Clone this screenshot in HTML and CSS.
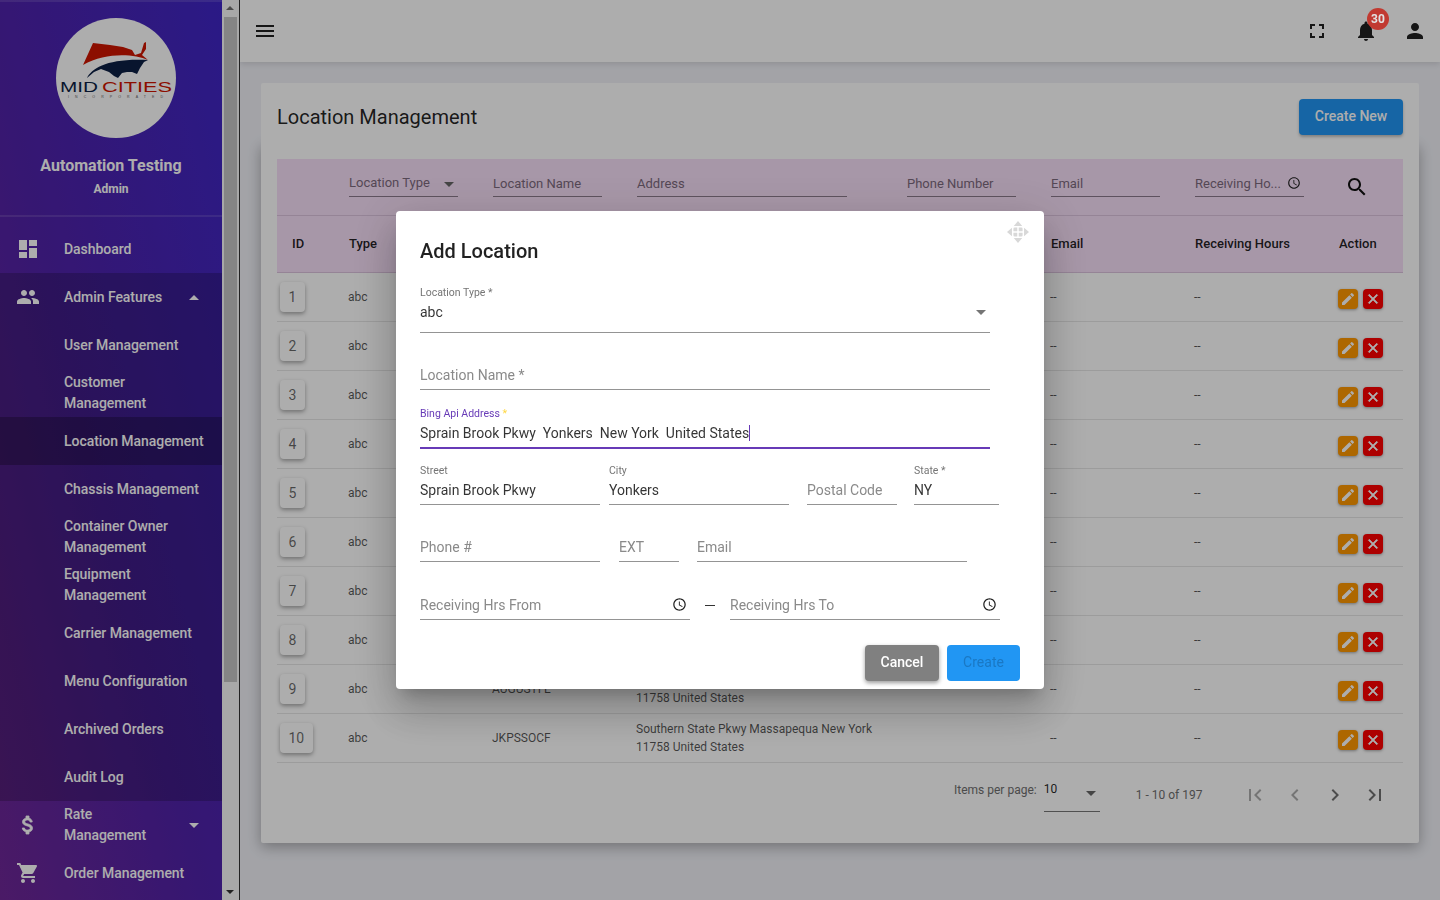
FILE: index.html
```html
<!DOCTYPE html>
<html lang="en">
<head>
  <meta charset="UTF-8">
  <title>Location Management</title>
  <link rel="stylesheet" href="styles.css">
</head>
<body>

  <svg class="defs">
    <symbol id="pencil" viewBox="0 0 24 24"><path d="M3 17.25V21h3.75L17.81 9.94l-3.75-3.75L3 17.25zM20.71 7.04a1 1 0 0 0 0-1.41l-2.34-2.34a1 1 0 0 0-1.41 0l-1.83 1.83 3.75 3.75 1.83-1.83z"/></symbol>
    <symbol id="cross" viewBox="0 0 24 24"><path d="M19 6.41 17.59 5 12 10.59 6.41 5 5 6.41 10.59 12 5 17.59 6.41 19 12 13.41 17.59 19 19 17.59 13.41 12z"/></symbol>
    <symbol id="clock" viewBox="0 0 24 24"><path d="M11.99 2C6.47 2 2 6.48 2 12s4.47 10 9.99 10C17.52 22 22 17.52 22 12S17.52 2 11.99 2zM12 20c-4.42 0-8-3.58-8-8s3.58-8 8-8 8 3.58 8 8-3.58 8-8 8zm.5-13H11v6l5.25 3.15.75-1.23-4.5-2.67z"/></symbol>
  </svg>

  <aside class="sidebar">
    <div class="brand">
      <div class="logo">
        <svg viewBox="0 0 120 120" width="120" height="120">
          <path fill="#cf1600" d="M27 47 L37 25 L54 27 L67 29 L76 32 L79 37 L85 35 L88 25 L90 24 L90 31 L86 37 L92 42 C78 36 50 34 27 47Z"/>
          <path fill="#0c1f45" d="M31 60 C36 50 52 40 92 42 L88 44 L84 50 L81 56 L76 54 L71 54 L66 55 L62 60 L58 58 L53 54 L45 51 L38 54Z"/>
          <text class="logo-mid" x="4" y="74" textLength="38" lengthAdjust="spacingAndGlyphs">MID</text>
          <text class="logo-cities" x="46" y="74" textLength="70" lengthAdjust="spacingAndGlyphs">CITIES</text>
          <text class="logo-inc" x="12" y="79.5" textLength="95">INCORPORATED</text>
        </svg>
      </div>
      <div class="brand-name">Automation Testing</div>
      <div class="brand-role">Admin</div>
    </div>

    <nav class="menu">
      <a class="menu-item">
        <svg class="menu-icon" viewBox="0 0 24 24"><path d="M3 13h8V3H3v10zm0 8h8v-6H3v6zm10 0h8V11h-8v10zm0-18v6h8V3h-8z"/></svg>
        <span>Dashboard</span>
      </a>
      <div class="submenu">
        <a class="menu-item">
          <svg class="menu-icon" viewBox="0 0 24 24"><path d="M16 11c1.66 0 2.99-1.34 2.99-3S17.66 5 16 5s-3 1.34-3 3 1.34 3 3 3zm-8 0c1.66 0 2.99-1.34 2.99-3S9.66 5 8 5 5 6.34 5 8s1.34 3 3 3zm0 2c-2.33 0-7 1.17-7 3.5V19h14v-2.5C15 14.17 10.33 13 8 13zm8 0c-.29 0-.62.02-.97.05 1.16.84 1.97 1.97 1.97 3.45V19h6v-2.5c0-2.33-4.67-3.5-7-3.5z"/></svg>
          <span>Admin Features</span>
          <i class="caret caret-up"></i>
        </a>
        <a class="menu-item sub">User Management</a>
        <a class="menu-item sub">Customer Management</a>
        <a class="menu-item sub active">Location Management</a>
        <a class="menu-item sub">Chassis Management</a>
        <a class="menu-item sub">Container Owner Management</a>
        <a class="menu-item sub">Equipment Management</a>
        <a class="menu-item sub">Carrier Management</a>
        <a class="menu-item sub">Menu Configuration</a>
        <a class="menu-item sub">Archived Orders</a>
        <a class="menu-item sub">Audit Log</a>
      </div>
      <a class="menu-item">
        <svg class="menu-icon bold" viewBox="0 0 24 24"><path d="M11.8 10.9c-2.27-.59-3-1.2-3-2.15 0-1.09 1.01-1.85 2.7-1.85 1.78 0 2.44.85 2.5 2.1h2.21c-.07-1.72-1.12-3.3-3.21-3.81V3h-3v2.16c-1.94.42-3.5 1.68-3.5 3.61 0 2.31 1.91 3.46 4.7 4.13 2.5.6 3 1.48 3 2.41 0 .69-.49 1.79-2.7 1.79-2.06 0-2.87-.92-2.98-2.1h-2.2c.12 2.19 1.76 3.42 3.68 3.83V21h3v-2.15c1.95-.37 3.5-1.5 3.5-3.55 0-2.84-2.43-3.81-4.7-4.4z"/></svg>
        <span class="narrow">Rate Management</span>
        <i class="caret"></i>
      </a>
      <a class="menu-item">
        <svg class="menu-icon" viewBox="0 0 24 24"><path d="M7 18c-1.1 0-1.99.9-1.99 2S5.9 22 7 22s2-.9 2-2-.9-2-2-2zM1 2v2h2l3.6 7.59-1.35 2.45c-.16.28-.25.61-.25.96 0 1.1.9 2 2 2h12v-2H7.42c-.14 0-.25-.11-.25-.25l.03-.12.9-1.63h7.45c.75 0 1.41-.41 1.75-1.03l3.58-6.49c.08-.14.12-.31.12-.48 0-.55-.45-1-1-1H5.21l-.94-2H1zm16 16c-1.1 0-1.99.9-1.99 2s.89 2 1.99 2 2-.9 2-2-.9-2-2-2z"/></svg>
        <span>Order Management</span>
      </a>
    </nav>
  </aside>

  <div class="scrollbar">
    <i class="scroll-arrow"></i>
    <div class="scroll-thumb"></div>
    <i class="scroll-arrow down"></i>
  </div>

  <main class="main">
    <header class="topbar">
      <svg class="top-icon menu-btn" viewBox="0 0 24 24"><path d="M3 18h18v-2H3v2zm0-5h18v-2H3v2zm0-7v2h18V6H3z"/></svg>
      <div class="top-right">
        <svg class="top-icon" viewBox="0 0 24 24"><path d="M7 14H5v5h5v-2H7v-3zM5 10h2V7h3V5H5v5zm12 7h-3v2h5v-5h-2v3zM14 5v2h3v3h2V5h-5z"/></svg>
        <div class="bell">
          <svg class="top-icon" viewBox="0 0 24 24"><path d="M12 22c1.1 0 2-.9 2-2h-4c0 1.1.9 2 2 2zm6-6v-5c0-3.07-1.63-5.64-4.5-6.32V4c0-.83-.67-1.5-1.5-1.5s-1.5.67-1.5 1.5v.68C7.64 5.36 6 7.92 6 11v5l-2 2v1h16v-1l-2-2z"/></svg>
          <span class="badge">30</span>
        </div>
        <svg class="top-icon" viewBox="0 0 24 24"><path d="M12 12c2.21 0 4-1.79 4-4s-1.79-4-4-4-4 1.79-4 4 1.79 4 4 4zm0 2c-2.67 0-8 1.34-8 4v2h16v-2c0-2.66-5.33-4-8-4z"/></svg>
      </div>
    </header>

    <section class="card">
      <div class="card-head">
        <h1>Location Management</h1>
        <button class="btn btn-blue">Create New</button>
      </div>
      <div class="card-body">
        <div class="table">
          <div class="row filter-row">
            <span></span>
            <div class="filter select"><span class="filter-select">Location Type</span><i class="caret dark"></i></div>
            <div class="filter">Location Name</div>
            <div class="filter w210">Address</div>
            <div class="filter">Phone Number</div>
            <div class="filter">Email</div>
            <div class="filter">Receiving Ho...
              <svg class="clock small"><use href="#clock"/></svg>
            </div>
            <svg class="search" viewBox="0 0 24 24"><path d="M15.5 14h-.79l-.28-.27C15.41 12.59 16 11.11 16 9.5 16 5.91 13.09 3 9.5 3S3 5.91 3 9.5 5.91 16 9.5 16c1.61 0 3.09-.59 4.23-1.57l.27.28v.79l5 4.99L20.49 19l-4.99-5zm-6 0C7.01 14 5 11.99 5 9.5S7.01 5 9.5 5 14 7.01 14 9.5 11.99 14 9.5 14z"/></svg>
          </div>
          <div class="row head-row">
            <span class="id-head">ID</span><span>Type</span><span></span><span></span><span></span><span>Email</span><span>Receiving Hours</span><span>Action</span>
          </div>
          <div class="row data-row"><span><button class="id-btn">1</button></span><span class="cell">abc</span><span></span><span></span><span></span><span class="cell">--</span><span class="cell">--</span><div class="actions"><button class="act edit"><svg><use href="#pencil"/></svg></button><button class="act del"><svg><use href="#cross"/></svg></button></div></div>
          <div class="row data-row"><span><button class="id-btn">2</button></span><span class="cell">abc</span><span></span><span></span><span></span><span class="cell">--</span><span class="cell">--</span><div class="actions"><button class="act edit"><svg><use href="#pencil"/></svg></button><button class="act del"><svg><use href="#cross"/></svg></button></div></div>
          <div class="row data-row"><span><button class="id-btn">3</button></span><span class="cell">abc</span><span></span><span></span><span></span><span class="cell">--</span><span class="cell">--</span><div class="actions"><button class="act edit"><svg><use href="#pencil"/></svg></button><button class="act del"><svg><use href="#cross"/></svg></button></div></div>
          <div class="row data-row"><span><button class="id-btn">4</button></span><span class="cell">abc</span><span></span><span></span><span></span><span class="cell">--</span><span class="cell">--</span><div class="actions"><button class="act edit"><svg><use href="#pencil"/></svg></button><button class="act del"><svg><use href="#cross"/></svg></button></div></div>
          <div class="row data-row"><span><button class="id-btn">5</button></span><span class="cell">abc</span><span></span><span></span><span></span><span class="cell">--</span><span class="cell">--</span><div class="actions"><button class="act edit"><svg><use href="#pencil"/></svg></button><button class="act del"><svg><use href="#cross"/></svg></button></div></div>
          <div class="row data-row"><span><button class="id-btn">6</button></span><span class="cell">abc</span><span></span><span></span><span></span><span class="cell">--</span><span class="cell">--</span><div class="actions"><button class="act edit"><svg><use href="#pencil"/></svg></button><button class="act del"><svg><use href="#cross"/></svg></button></div></div>
          <div class="row data-row"><span><button class="id-btn">7</button></span><span class="cell">abc</span><span></span><span></span><span></span><span class="cell">--</span><span class="cell">--</span><div class="actions"><button class="act edit"><svg><use href="#pencil"/></svg></button><button class="act del"><svg><use href="#cross"/></svg></button></div></div>
          <div class="row data-row"><span><button class="id-btn">8</button></span><span class="cell">abc</span><span></span><span></span><span></span><span class="cell">--</span><span class="cell">--</span><div class="actions"><button class="act edit"><svg><use href="#pencil"/></svg></button><button class="act del"><svg><use href="#cross"/></svg></button></div></div>
          <div class="row data-row"><span><button class="id-btn">9</button></span><span class="cell">abc</span><span class="cell">AUGUSTI E</span><span class="cell addr">Southern State Pkwy Massapequa New York 11758 United States</span><span></span><span class="cell">--</span><span class="cell">--</span><div class="actions"><button class="act edit"><svg><use href="#pencil"/></svg></button><button class="act del"><svg><use href="#cross"/></svg></button></div></div>
          <div class="row data-row"><span><button class="id-btn">10</button></span><span class="cell">abc</span><span class="cell">JKPSSOCF</span><span class="cell addr">Southern State Pkwy Massapequa New York 11758 United States</span><span></span><span class="cell">--</span><span class="cell">--</span><div class="actions"><button class="act edit"><svg><use href="#pencil"/></svg></button><button class="act del"><svg><use href="#cross"/></svg></button></div></div>
        </div>

        <div class="pager">
          <span class="per-page">Items per page:</span>
          <div class="per-select"><span>10</span><i class="caret dark"></i></div>
          <span class="range">1 - 10 of 197</span>
          <div class="pager-nav">
            <svg class="faded" viewBox="0 0 24 24"><path d="M18.41 16.59 13.82 12l4.59-4.59L17 6l-6 6 6 6zM6 6h2v12H6z"/></svg>
            <svg class="faded" viewBox="0 0 24 24"><path d="M15.41 7.41 14 6l-6 6 6 6 1.41-1.41L10.83 12z"/></svg>
            <svg viewBox="0 0 24 24"><path d="M10 6 8.59 7.41 13.17 12l-4.58 4.59L10 18l6-6z"/></svg>
            <svg viewBox="0 0 24 24"><path d="M5.59 7.41 10.18 12l-4.59 4.59L7 18l6-6-6-6zM16 6h2v12h-2z"/></svg>
          </div>
        </div>
      </div>
    </section>
  </main>

  <div class="overlay">
    <div class="modal">
      <svg class="move-icon" viewBox="0 0 24 24"><path d="M12 0l4.6 5.4H7.4zM12 24l-4.6-5.4h9.2zM0 12l5.4-4.6v9.2zM24 12l-5.4 4.6V7.4z"/><path d="M8.500 7h2.700v4.200H7V8.500A1.500 1.500 0 0 1 8.500 7zM12.800 7h2.700A1.500 1.500 0 0 1 17 8.500v2.700h-4.200zM7 12.800h4.200V17H8.500A1.500 1.500 0 0 1 7 15.500zM12.800 12.800H17v2.700a1.500 1.500 0 0 1-1.500 1.500h-2.700z"/></svg>
      <h2>Add Location</h2>

      <div class="form-row first">
        <div class="field w570 tall">
          <label>Location Type *</label>
          <div class="value">abc</div>
          <i class="caret field-caret"></i>
        </div>
      </div>
      <div class="form-row">
        <div class="field w570">
          <label></label>
          <div class="value empty">Location Name *</div>
        </div>
      </div>
      <div class="form-row wide-gap">
        <div class="field w570 focused">
          <label>Bing Api Address <em>*</em></label>
          <div class="value"><span class="cursor">Sprain Brook Pkwy&nbsp; Yonkers&nbsp; New York&nbsp; United States</span></div>
        </div>
      </div>
      <div class="form-row after-focus">
        <div class="field w180"><label>Street</label><div class="value">Sprain Brook Pkwy</div></div>
        <div class="field w180 gap9"><label>City</label><div class="value">Yonkers</div></div>
        <div class="field w90 gap18"><label></label><div class="value empty">Postal Code</div></div>
        <div class="field w85 gap17"><label>State *</label><div class="value">NY</div></div>
      </div>
      <div class="form-row">
        <div class="field w180"><label></label><div class="value empty">Phone #</div></div>
        <div class="field w60 gap19"><label></label><div class="value empty">EXT</div></div>
        <div class="field w270 gap18"><label></label><div class="value empty">Email</div></div>
      </div>
      <div class="form-row wide-gap">
        <div class="field w270">
          <label></label>
          <div class="value empty">Receiving Hrs From</div>
          <svg class="clock"><use href="#clock"/></svg>
        </div>
        <span class="dash"></span>
        <div class="field w270">
          <label></label>
          <div class="value empty">Receiving Hrs To</div>
          <svg class="clock"><use href="#clock"/></svg>
        </div>
      </div>

      <div class="modal-actions">
        <button class="btn btn-grey">Cancel</button>
        <button class="btn btn-create">Create</button>
      </div>
    </div>
  </div>

</body>
</html>
```

FILE: styles.css
```css
* {
  box-sizing: border-box;
}

body {
  margin: 0;
  height: 900px;
  overflow: hidden;
  display: flex;
  font-family: Roboto, Arial, sans-serif;
  background: #f0f1f7;
  color: rgba(0,0,0,0.87);
}

.defs {
  display: none;
}

.caret {
  width: 0;
  height: 0;
  border-left: 5px solid transparent;
  border-right: 5px solid transparent;
  border-top: 5px solid #fff;
  display: block;
}

.caret-up {
  border-top: 0;
  border-bottom: 5px solid #fff;
}

.caret.dark {
  border-top-color: #666;
}

/* sidebar */
.sidebar {
  width: 222px;
  height: 900px;
  flex-shrink: 0;
  overflow: hidden;
  color: #fff;
  background: linear-gradient(to bottom left, #3f26c6 0%, #5022a8 55%, #6e2797 100%);
}

.brand {
  height: 217px;
  padding-top: 16px;
  border-top: 2px solid rgba(255,255,255,0.12);
  border-bottom: 2px solid rgba(255,255,255,0.12);
  text-align: center;
}

.logo {
  width: 120px;
  height: 120px;
  margin-left: 56px;
  border-radius: 50%;
  background: #fff;
}

.logo svg {
  display: block;
}

.logo-mid,
.logo-cities {
  font: 400 14px "Liberation Sans", Arial, sans-serif;
}

.logo-mid {
  fill: #0c1f45;
}

.logo-cities {
  fill: #cf1600;
}

.logo-inc {
  font: 400 3.5px "Liberation Sans", Arial, sans-serif;
  fill: #666;
}

.brand-name {
  margin-top: 17px;
  font-size: 16px;
  font-weight: 700;
  line-height: 21px;
}

.brand-role {
  margin-top: 5px;
  font-size: 12px;
  font-weight: 700;
  line-height: 16px;
}

.menu {
  padding-top: 8px;
}

.menu-item {
  height: 48px;
  display: flex;
  align-items: center;
  padding: 0 23px 0 64px;
  position: relative;
  font-size: 14px;
  font-weight: 500;
  line-height: 21px;
  letter-spacing: -0.05px;
}

.menu-item .caret {
  margin-left: auto;
  flex-shrink: 0;
}

.narrow {
  max-width: 90px;
}

.menu-icon {
  position: absolute;
  left: 16px;
  top: 12px;
  width: 24px;
  height: 24px;
  fill: #fff;
}

.menu-icon.bold {
  stroke: #fff;
  stroke-width: 0.8;
}

.submenu {
  background: rgba(0,0,0,0.2);
}

.sub {
  padding-right: 13px;
}

.active {
  background: rgba(0,0,0,0.25);
}

/* page scrollbar */
.scrollbar {
  width: 18px;
  height: 900px;
  flex-shrink: 0;
  background: #f8f8f8;
  border-right: 1px solid #333;
  position: relative;
}

.scroll-thumb {
  position: absolute;
  left: 2px;
  top: 17px;
  width: 13px;
  height: 665px;
  background: #c4c4c4;
}

.scroll-arrow {
  position: absolute;
  left: 4px;
  top: 6px;
  width: 0;
  height: 0;
  border-left: 4px solid transparent;
  border-right: 4px solid transparent;
  border-bottom: 4px solid #707070;
}

.scroll-arrow.down {
  top: auto;
  bottom: 6px;
  border-bottom: 0;
  border-top: 4px solid #333;
}

/* main */
.main {
  flex: 1;
  min-width: 0;
}

.topbar {
  height: 62px;
  background: #fff;
  display: flex;
  align-items: center;
  justify-content: space-between;
  padding: 0 13px;
  box-shadow: 0 2px 6px rgba(0,0,0,0.12);
}

.top-icon {
  width: 24px;
  height: 24px;
  display: block;
  fill: #212121;
}

.top-right {
  display: flex;
  align-items: center;
  gap: 25px;
}

.bell {
  position: relative;
}

/* the reference keeps the badge brighter than the dimmed page */
.badge {
  position: absolute;
  z-index: 2;
  left: 13px;
  top: -11px;
  width: 22px;
  height: 22px;
  border-radius: 50%;
  background: #c13a31;
  color: #e2e2e2;
  font-size: 12px;
  font-weight: 700;
  line-height: 22px;
  text-align: center;
}

.card {
  margin: 21px 21px 0;
}

.card-head {
  height: 60px;
  display: flex;
  align-items: center;
  justify-content: space-between;
  padding: 0 16px;
  background: #fff;
  border-radius: 2px 2px 0 0;
  position: relative;
}

.card-head h1 {
  margin: 0 0 -8px;
  font-size: 20px;
  font-weight: 400;
}

.btn {
  border: 0;
  border-radius: 4px;
  padding: 0 0 2px;
  font-family: inherit;
  font-size: 14px;
  font-weight: 500;
  height: 36px;
  color: #fff;
}

.btn-blue {
  width: 104px;
  margin-top: 8px;
  background: #2196f3;
  box-shadow: 0 2px 3px rgba(0,0,0,0.25);
}

.card-body {
  height: 700px;
  padding: 16px;
  background: #fff;
  border-radius: 0 0 2px 2px;
  box-shadow: 0 4px 14px rgba(0,0,0,0.3);
}

.row {
  display: grid;
  grid-template-columns: 72px 144px 144px 270px 144px 144px 144px 64px;
  align-items: center;
}

.filter-row,
.head-row {
  background: #f7dff8;
  border-bottom: 1px solid #dcc3de;
}

.filter-row {
  height: 57px;
  align-items: start;
}

.filter {
  width: 109px;
  height: 26px;
  margin-top: 12px;
  padding-top: 4px;
  border-bottom: 1px solid #8b7a8c;
  font-size: 13px;
  line-height: 17px;
  color: #7d6a7e;
  position: relative;
}

.w210 {
  width: 210px;
}

.select .caret {
  position: absolute;
  right: 4px;
  top: 11px;
}

.filter-select {
  position: relative;
  top: -1px;
}

.clock {
  position: absolute;
  right: 3px;
  top: 21px;
  width: 15px;
  height: 15px;
  fill: #222;
}

.clock.small {
  top: 5px;
  right: 3px;
  width: 14px;
  height: 14px;
}

.search {
  width: 24px;
  height: 24px;
  margin: 16px 0 0 6px;
  fill: #111;
}

.head-row {
  height: 57px;
  padding-bottom: 2px;
  font-size: 13px;
  font-weight: 500;
}

.id-head {
  padding-left: 15px;
}

.data-row {
  height: 49px;
  border-bottom: 1px solid #e6e6e6;
  font-size: 12px;
  line-height: 18px;
}

.cell {
  margin-left: -1px;
  color: rgba(0,0,0,0.68);
}

.addr {
  max-width: 240px;
}

.id-btn {
  min-width: 24px;
  height: 30px;
  margin: 0 0 1px 3px;
  padding: 0 8.5px;
  border: 0;
  border-radius: 4px;
  background: #fff;
  font-family: inherit;
  font-size: 14px;
  color: rgba(0,0,0,0.6);
  box-shadow: 0 2px 4px rgba(0,0,0,0.35);
}

.actions {
  display: flex;
  gap: 5px;
  margin: 4px 0 0 -1px;
}

.act {
  width: 20px;
  height: 20px;
  padding: 2px;
  border: 0;
  border-radius: 4px;
  box-shadow: 0 1px 3px rgba(0,0,0,0.35);
}

.act svg {
  display: block;
  width: 16px;
  height: 16px;
  fill: #fff;
}

.del svg {
  stroke: #fff;
  stroke-width: 1;
}

.edit {
  background: #ff9800;
}

.del {
  background: #ff0000;
}

.pager {
  height: 80px;
  display: flex;
  font-size: 12px;
  color: #6f6f6f;
}

.per-page {
  margin: 20px 0 0 677px;
}

.per-select {
  width: 56px;
  height: 30px;
  margin: 19px 0 0 7px;
  border-bottom: 1px solid #777;
  color: rgba(0,0,0,0.87);
  position: relative;
}

.per-select .caret {
  position: absolute;
  right: 4px;
  top: 9px;
}

.range {
  margin: 25px 0 0 36px;
}

.pager-nav {
  display: flex;
  gap: 16px;
  margin: 20px 0 0 41px;
}

.pager-nav svg {
  width: 24px;
  height: 24px;
  fill: #707070;
}

.pager-nav .faded {
  fill: #adadad;
}

/* dialog */
.overlay {
  position: fixed;
  inset: 0;
  background: rgba(0,0,0,0.32);
  display: flex;
  align-items: center;
  justify-content: center;
}

.modal {
  width: 648px;
  height: 478px;
  padding: 24px;
  background: #fff;
  border-radius: 4px;
  position: relative;
  box-shadow: 0 11px 15px -7px rgba(0,0,0,0.2), 0 24px 38px 3px rgba(0,0,0,0.14), 0 9px 46px 8px rgba(0,0,0,0.12);
}

.move-icon {
  position: absolute;
  right: 15px;
  top: 10px;
  width: 22px;
  height: 22px;
  fill: #d8d8d8;
}

.modal h2 {
  margin: 0 0 16px;
  font-size: 20px;
  font-weight: 500;
  line-height: 32px;
}

.form-row {
  display: flex;
  margin-top: 13px;
}

.form-row.first {
  margin-top: 0;
}

.form-row.wide-gap {
  margin-top: 14px;
}

.form-row.after-focus {
  margin-top: 12px;
}

.field {
  height: 44px;
  padding-bottom: 3px;
  border-bottom: 1px solid #949494;
  position: relative;
  flex-shrink: 0;
}

.field.tall {
  height: 50px;
}

.field label {
  display: block;
  height: 18px;
  font-size: 10.5px;
  line-height: 20px;
  color: #757575;
}

.field .value {
  height: 22px;
  font-size: 14px;
  line-height: 22px;
  color: rgba(0,0,0,0.8);
  white-space: nowrap;
}

.field .value.empty {
  color: #8a8a8a;
}

.field.focused {
  height: 45px;
  border-bottom: 2px solid #673ab7;
}

.field.focused label {
  color: #673ab7;
}

.field.focused em {
  font-style: normal;
  color: #ffd740;
}

.cursor {
  border-right: 1px solid #673ab7;
}

.field-caret {
  position: absolute;
  right: 4px;
  top: 27px;
  border-top-color: #757575;
}

.w570 { width: 570px; }
.w270 { width: 270px; }
.w180 { width: 180px; }
.w90 { width: 90px; }
.w85 { width: 85px; }
.w60 { width: 60px; }
.gap9 { margin-left: 9px; }
.gap17 { margin-left: 17px; }
.gap18 { margin-left: 18px; }
.gap19 { margin-left: 19px; }

.dash {
  width: 10px;
  height: 1px;
  margin: 29px 15px 0;
  background: #333;
}

.modal-actions {
  display: flex;
  justify-content: flex-end;
  gap: 8px;
  margin-top: 25px;
}

.btn-grey {
  width: 74px;
  background: #808080;
  box-shadow: 0 2px 4px rgba(0,0,0,0.4);
}

.btn-create {
  width: 73px;
  background: #2196f3;
  color: #1a78c4;
  font-weight: 400;
}
```
